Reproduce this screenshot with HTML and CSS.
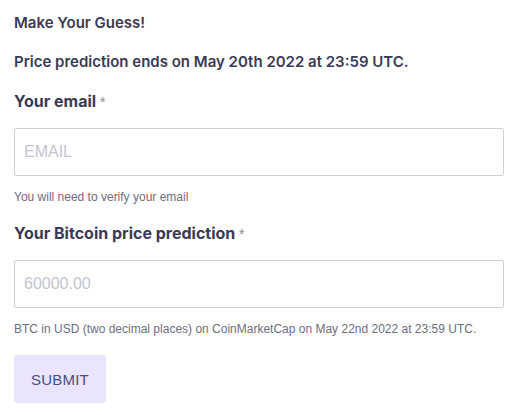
FILE: index.html
```html
<!DOCTYPE html>
<html>
<head>
<meta charset="utf-8">
<link rel="stylesheet" href="styles.css">
</head>
<body>
<form class="guess-form">
  <p class="title">Make Your Guess!</p>
  <p class="subtitle">Price prediction ends on May 20th 2022 at 23:59 UTC.</p>
  <div class="field">
    <label class="label">Your email <span class="req">*</span></label>
    <input class="input" type="text" placeholder="EMAIL">
    <div class="help">You will need to verify your email</div>
  </div>
  <div class="field">
    <label class="label">Your Bitcoin price prediction <span class="req">*</span></label>
    <input class="input" type="text" placeholder="60000.00">
    <div class="help">BTC in USD (two decimal places) on CoinMarketCap on May 22nd 2022 at 23:59 UTC.</div>
  </div>
  <button class="submit" type="button">SUBMIT</button>
</form>
</body>
</html>
```
FILE: styles.css
```css
html, body {
  margin: 0;
  padding: 0;
  background: #ffffff;
}
body {
  padding: 13px 17px 0 14px;
  font-family: Inter, "Liberation Sans", sans-serif;
  color: #3a3a55;
}
.guess-form {
  display: flex;
  flex-direction: column;
}
.title {
  margin: 0;
  font-size: 15px;
  font-weight: 600;
  line-height: 20px;
}
.subtitle {
  margin: 19px 0 0;
  font-size: 15px;
  font-weight: 600;
  line-height: 20px;
}
.field {
  display: flex;
  flex-direction: column;
}
.field:first-of-type {
  margin-top: 19px;
}
.field + .field {
  margin-top: 18px;
}
.label {
  font-size: 16px;
  font-weight: 700;
  line-height: 20px;
}
.req {
  font-family: "Liberation Sans", Arial, sans-serif;
  font-weight: 400;
  font-size: 14px;
  color: #8a8a9a;
}
.input {
  margin-top: 16px;
  height: 48px;
  box-sizing: border-box;
  border: 1px solid #cfcfd6;
  border-radius: 2px;
  padding: 0 9px;
  font-family: "Liberation Sans", Arial, sans-serif;
  font-size: 16px;
  color: #3a3a55;
  background: #fff;
}
.input::placeholder {
  color: #c4c4d2;
}
.help {
  margin-top: 14px;
  font-family: "Liberation Sans", Arial, sans-serif;
  font-size: 12px;
  line-height: 15px;
  color: #6e6e80;
}
.submit {
  align-self: flex-start;
  margin-top: 18px;
  width: 92px;
  height: 48px;
  border: none;
  border-radius: 3px;
  background: #ebe4fd;
  color: #4b4b80;
  font-family: "Liberation Sans", Arial, sans-serif;
  font-size: 15px;
  letter-spacing: 0.2px;
  cursor: pointer;
}
```
